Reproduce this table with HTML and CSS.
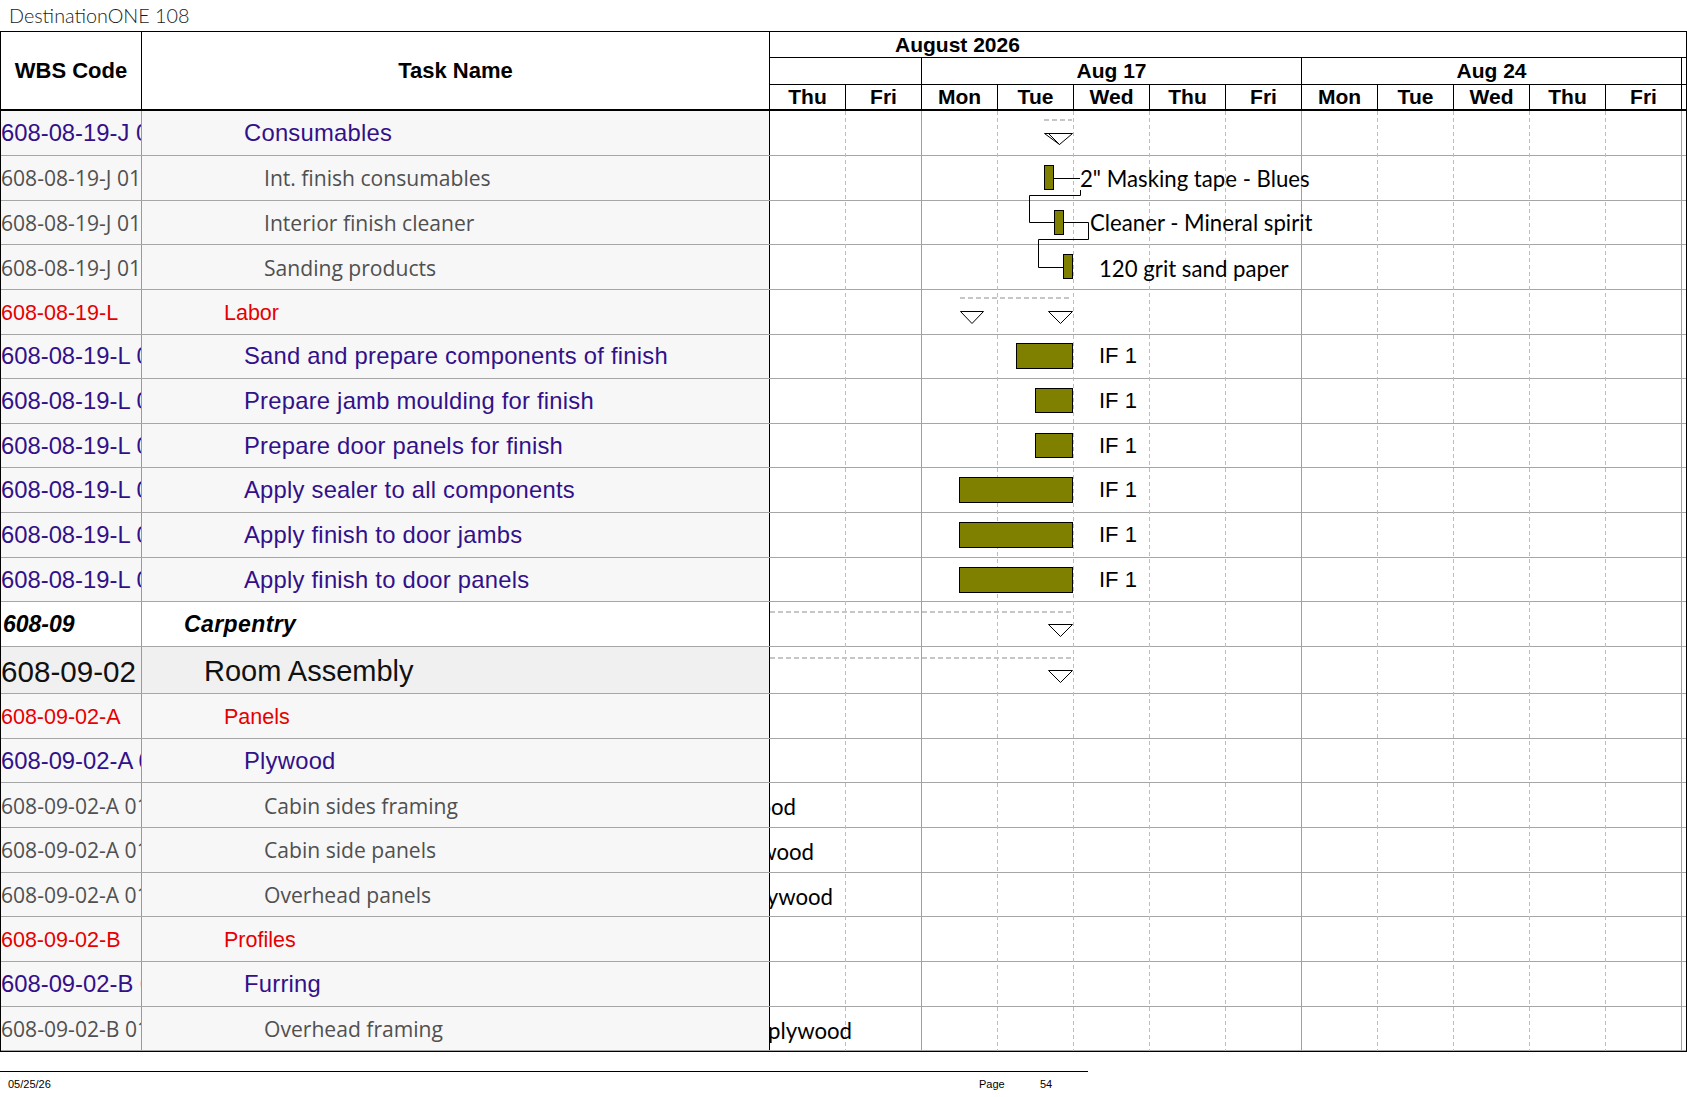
FILE: index.html
```html
<!DOCTYPE html>
<html>
<head>
<meta charset="utf-8">
<title>DestinationONE 108</title>
<link rel="stylesheet" href="styles.css">
</head>
<body>
<div class="page">
  <div class="title">DestinationONE 108</div>
  <div class="sheet">
    <div class="head">
      <div class="hcell">WBS Code</div>
      <div class="hcell">Task Name</div>
      <div class="tl-head">
        <div class="month">August 2026</div>
        <div class="weeks">
          <div class="week w2"></div>
          <div class="week w5">Aug 17</div>
          <div class="week w5">Aug 24</div>
        </div>
        <div class="days">
          <div class="day">Thu</div><div class="day">Fri</div>
          <div class="day">Mon</div><div class="day">Tue</div><div class="day">Wed</div><div class="day">Thu</div><div class="day">Fri</div>
          <div class="day">Mon</div><div class="day">Tue</div><div class="day">Wed</div><div class="day">Thu</div><div class="day">Fri</div>
        </div>
      </div>
    </div>
    <div class="body">
      <div class="row first purple"><div class="code">608-08-19-J 01</div><div class="task">Consumables</div><div class="tl"></div></div>
      <div class="row gray"><div class="code">608-08-19-J 01.01</div><div class="task">Int. finish consumables</div><div class="tl"></div></div>
      <div class="row gray"><div class="code">608-08-19-J 01.02</div><div class="task">Interior finish cleaner</div><div class="tl"></div></div>
      <div class="row gray"><div class="code">608-08-19-J 01.03</div><div class="task">Sanding products</div><div class="tl"></div></div>
      <div class="row red"><div class="code">608-08-19-L</div><div class="task">Labor</div><div class="tl"></div></div>
      <div class="row purple"><div class="code">608-08-19-L 01</div><div class="task">Sand and prepare components of finish</div><div class="tl"></div></div>
      <div class="row purple"><div class="code">608-08-19-L 02</div><div class="task">Prepare jamb moulding for finish</div><div class="tl"></div></div>
      <div class="row purple"><div class="code">608-08-19-L 03</div><div class="task">Prepare door panels for finish</div><div class="tl"></div></div>
      <div class="row purple"><div class="code">608-08-19-L 04</div><div class="task">Apply sealer to all components</div><div class="tl"></div></div>
      <div class="row purple"><div class="code">608-08-19-L 05</div><div class="task">Apply finish to door jambs</div><div class="tl"></div></div>
      <div class="row purple"><div class="code">608-08-19-L 06</div><div class="task">Apply finish to door panels</div><div class="tl"></div></div>
      <div class="row carp"><div class="code">608-09</div><div class="task">Carpentry</div><div class="tl"></div></div>
      <div class="row room"><div class="code">608-09-02</div><div class="task">Room Assembly</div><div class="tl"></div></div>
      <div class="row red"><div class="code">608-09-02-A</div><div class="task">Panels</div><div class="tl"></div></div>
      <div class="row purple"><div class="code">608-09-02-A 01</div><div class="task">Plywood</div><div class="tl"></div></div>
      <div class="row gray"><div class="code">608-09-02-A 01.01</div><div class="task">Cabin sides framing</div><div class="tl"></div></div>
      <div class="row gray"><div class="code">608-09-02-A 01.02</div><div class="task">Cabin side panels</div><div class="tl"></div></div>
      <div class="row gray"><div class="code">608-09-02-A 01.03</div><div class="task">Overhead panels</div><div class="tl"></div></div>
      <div class="row red"><div class="code">608-09-02-B</div><div class="task">Profiles</div><div class="tl"></div></div>
      <div class="row purple"><div class="code">608-09-02-B 01</div><div class="task">Furring</div><div class="tl"></div></div>
      <div class="row gray"><div class="code">608-09-02-B 01.01</div><div class="task">Overhead framing</div><div class="tl"></div></div>

      <div class="gantt">
        <svg width="916" height="940" viewBox="770 111 916 940" xmlns="http://www.w3.org/2000/svg">
          <g stroke="#bdbdbd" stroke-width="1" stroke-dasharray="4 3">
            <line x1="845.5" y1="111" x2="845.5" y2="1051"/>
            <line x1="997.5" y1="111" x2="997.5" y2="1051"/>
            <line x1="1073.5" y1="111" x2="1073.5" y2="1051"/>
            <line x1="1149.5" y1="111" x2="1149.5" y2="1051"/>
            <line x1="1225.5" y1="111" x2="1225.5" y2="1051"/>
            <line x1="1377.5" y1="111" x2="1377.5" y2="1051"/>
            <line x1="1453.5" y1="111" x2="1453.5" y2="1051"/>
            <line x1="1529.5" y1="111" x2="1529.5" y2="1051"/>
            <line x1="1605.5" y1="111" x2="1605.5" y2="1051"/>
          </g>
          <g stroke="#a0a0a0" stroke-width="1">
            <line x1="921.5" y1="111" x2="921.5" y2="1051"/>
            <line x1="1301.5" y1="111" x2="1301.5" y2="1051"/>
            <line x1="1681.5" y1="111" x2="1681.5" y2="1051"/>
          </g>
          <g stroke="#c6c6c6" stroke-width="2" stroke-dasharray="5 3" fill="none">
            <path d="M1044 120 H1072"/>
            <path d="M960 298 H1072"/>
            <path d="M770 612 H1072"/>
            <path d="M770 658 H1072"/>
          </g>
          <g fill="#ffffff" stroke="#000" stroke-width="1">
            <polygon points="1044.5,133.5 1072.5,133.5 1059.5,144.5"/>
            <line x1="1048.5" y1="133.5" x2="1059.5" y2="144.5"/>
            <polygon points="960.5,311.5 983.5,311.5 972,323.5"/>
            <polygon points="1048.5,311.5 1072.5,311.5 1060.5,323.5"/>
            <polygon points="1048.5,624.5 1072.5,624.5 1060.5,636.5"/>
            <polygon points="1048.5,670.5 1072.5,670.5 1060.5,682.5"/>
          </g>
          <g fill="none" stroke="#000" stroke-width="1">
            <path d="M1054 178.5 H1080"/>
            <path d="M1080.5 190 V195.5 H1029.5 V222.5 H1054"/>
            <path d="M1063 222.5 H1088.5 V239.5 H1038.5 V267.5 H1063"/>
          </g>
          <g fill="#808000" stroke="#000" stroke-width="1">
            <rect x="1044.5" y="165.5" width="9" height="24"/>
            <rect x="1054.5" y="210.5" width="9" height="24"/>
            <rect x="1063.5" y="254.5" width="9" height="24"/>
            <rect x="1016.5" y="343.5" width="56" height="25"/>
            <rect x="1035.5" y="388.5" width="37" height="24"/>
            <rect x="1035.5" y="433.5" width="37" height="24"/>
            <rect x="959.5" y="477.5" width="113" height="25"/>
            <rect x="959.5" y="522.5" width="113" height="25"/>
            <rect x="959.5" y="567.5" width="113" height="25"/>
          </g>
        </svg>
        <span class="lbl" style="left:310px; top:68px">2" Masking tape - Blues</span>
        <span class="lbl" style="left:320px; top:112px">Cleaner - Mineral spirit</span>
        <span class="lbl" style="left:329px; top:158px">120 grit sand paper</span>
        <span class="lbl arial" style="left:329px; top:245px">IF 1</span>
        <span class="lbl arial" style="left:329px; top:290px">IF 1</span>
        <span class="lbl arial" style="left:329px; top:335px">IF 1</span>
        <span class="lbl arial" style="left:329px; top:379px">IF 1</span>
        <span class="lbl arial" style="left:329px; top:424px">IF 1</span>
        <span class="lbl arial" style="left:329px; top:469px">IF 1</span>
        <span class="lbl" style="right:890px; top:696px">1/2" Birch plywood</span>
        <span class="lbl" style="right:872px; top:741px">1/4" Birch plywood</span>
        <span class="lbl" style="right:853px; top:786px">1/4" Birch plywood</span>
        <span class="lbl" style="right:834px; top:920px">1/2" Birch plywood</span>
      </div>
    </div>
  </div>
  <div class="foot-line"></div>
  <div class="foot">
    <span class="f-date">05/25/26</span>
    <span class="f-page">Page</span>
    <span class="f-num">54</span>
  </div>
</div>
</body>
</html>
```

FILE: styles.css
```css
* { box-sizing: border-box; }

body {
  margin: 0;
  background: #ffffff;
  font-family: "Liberation Sans", Arial, sans-serif;
  color: #000;
}

.page {
  width: 1687px;
  height: 1097px;
  overflow: hidden;
}

.title {
  height: 31px;
  padding-left: 9px;
  font-family: Lato, "DejaVu Sans", sans-serif;
  font-weight: 300;
  font-size: 19.8px;
  line-height: 30px;
  color: #1a1a1a;
}

.sheet {
  width: 1687px;
  border: 1px solid #000;
}

/* ---------- header ---------- */
.head {
  display: grid;
  grid-template-columns: 141px 628px 1fr;
  height: 79px;
  border-bottom: 2px solid #000;
}

.hcell {
  display: flex;
  align-items: center;
  justify-content: center;
  font-weight: bold;
  font-size: 22px;
  border-right: 1px solid #000;
}

.tl-head {
  display: flex;
  flex-direction: column;
}

.month {
  height: 26px;
  border-bottom: 1px solid #000;
  display: flex;
  align-items: center;
  padding-left: 125px;
  font-weight: bold;
  font-size: 21px;
}

.weeks {
  height: 27px;
  border-bottom: 1px solid #000;
  display: flex;
}

.week {
  border-right: 1px solid #000;
  display: flex;
  align-items: center;
  justify-content: center;
  font-weight: bold;
  font-size: 21px;
}

.w2 { width: 152px; }
.w5 { width: 380px; }

.days {
  height: 24px;
  display: flex;
}

.day {
  width: 76px;
  border-right: 1px solid #000;
  display: flex;
  align-items: center;
  justify-content: center;
  font-weight: bold;
  font-size: 21px;
}

/* ---------- body ---------- */
.body {
  position: relative;
  height: 940px;
  overflow: hidden;
}

.row {
  display: grid;
  grid-template-columns: 141px 628px 1fr;
  height: 44.65px;
  border-bottom: 1px solid #a6a6a6;
}

.row.first { height: 45px; }
.row.room { height: 47px; }

.code {
  display: flex;
  align-items: center;
  overflow: hidden;
  white-space: nowrap;
  background: #f7f7f7;
  border-right: 1px solid #9a9a9a;
}

.task {
  display: flex;
  align-items: center;
  overflow: hidden;
  white-space: nowrap;
  background: #f7f7f7;
  border-right: 1px solid #000;
}

.tl { background: #ffffff; }

.purple .code,
.purple .task {
  color: #32108a;
  font-size: 23.8px;
}
.purple .task { padding-left: 102px; letter-spacing: 0.23px; }

.gray .code,
.gray .task {
  color: #505050;
  font-family: "Open Sans", Lato, sans-serif;
  font-size: 21.1px;
}
.gray .task { padding-left: 122px; }

.red .code,
.red .task {
  color: #e60000;
  font-size: 21.5px;
  padding-top: 3px;
}
.red .task { padding-left: 82px; }

.carp .code,
.carp .task {
  background: #ffffff;
  font-weight: bold;
  font-style: italic;
  font-size: 23px;
  color: #000;
}
.carp .code { padding-left: 2px; }
.carp .task { padding-left: 42px; letter-spacing: 0.4px; }

.room .code,
.room .task {
  background: #f0f0f0;
  font-size: 29px;
  color: #111;
  padding-top: 3px;
}
.room .code { font-size: 29.6px; }
.room .task { padding-left: 62px; }

/* ---------- gantt canvas ---------- */
.gantt {
  position: absolute;
  left: 769px;
  top: 0;
  width: 916px;
  height: 940px;
  overflow: hidden;
  pointer-events: none;
}

.gantt svg {
  position: absolute;
  left: 0;
  top: 0;
}

.lbl {
  position: absolute;
  white-space: nowrap;
  font-family: Lato, "Open Sans", sans-serif;
  font-size: 22.2px;
  line-height: 1;
  color: #000;
  transform: translateY(-50%);
}

.lbl.arial {
  font-family: "Liberation Sans", Arial, sans-serif;
  font-size: 22px;
}

/* ---------- footer ---------- */
.foot-line {
  width: 1088px;
  height: 0;
  border-top: 1px solid #000;
  margin-top: 19px;
}

.foot {
  display: flex;
  margin-top: 6px;
  font-size: 11px;
  line-height: 13px;
  color: #000;
}

.f-date { width: 979px; padding-left: 8px; }
.f-page { width: 61px; }
```
